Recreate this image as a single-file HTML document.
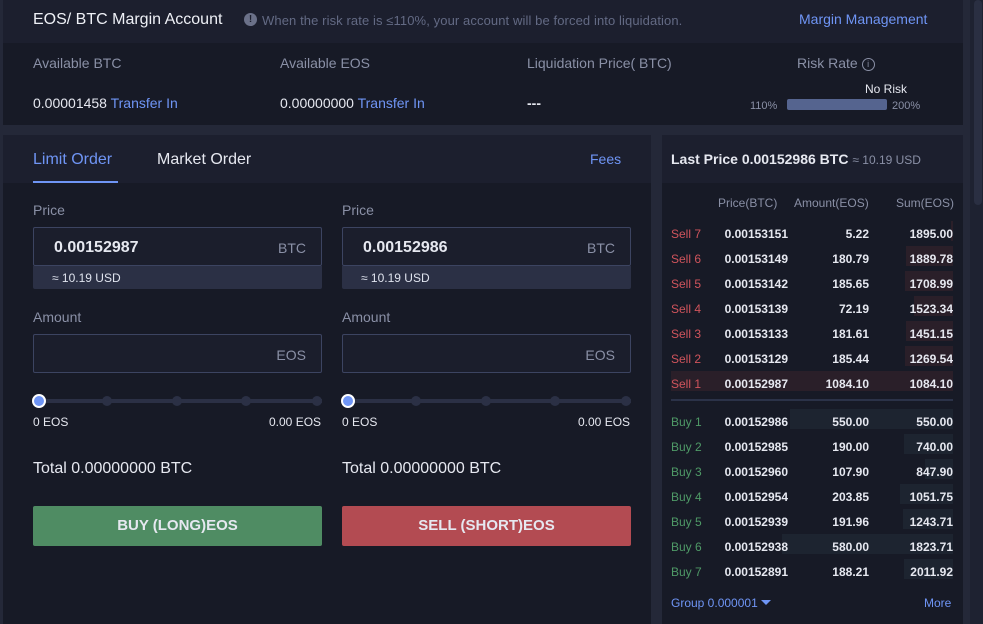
<!DOCTYPE html>
<html><head><meta charset="utf-8"><style>
*{margin:0;padding:0;box-sizing:border-box}
body{width:983px;height:624px;background:#242838;font-family:"Liberation Sans",sans-serif;position:relative;overflow:hidden;color:#e6e8f0}
.a{position:absolute}
.blue{color:#6f95f5}
.gray{color:#8a90a6}
.inp{position:absolute;height:39px;border:1px solid #3c4461;border-radius:2px;background:#1b1e2c}
.usd{position:absolute;height:23px;background:#2b3045;border-radius:0 0 2px 2px;font-size:12px;color:#dfe3ee;padding:5px 0 0 19px}
.row{position:absolute;left:662px;width:301px;height:25px;font-size:12px}
.row span{position:absolute;top:6px}
</style></head><body>
<div class="a" style="left:3px;top:0;width:960px;height:43px;background:#1c1f2e"></div>
<div class="a" style="left:3px;top:43px;width:960px;height:82px;background:#171a26"></div>
<div class="a" style="left:33px;top:11px;font-size:16px;color:#eef0f6">EOS/ BTC Margin Account</div>
<div class="a" style="left:244px;top:13px;width:13px;height:13px;border-radius:50%;background:#6b7189;color:#1c1f2e;font-size:10px;font-weight:bold;text-align:center;line-height:13px">!</div>
<div class="a gray" style="left:262px;top:13px;font-size:13px;color:#636a84;letter-spacing:0.1px">When the risk rate is ≤110%, your account will be forced into liquidation.</div>
<div class="a blue" style="left:799px;top:11px;font-size:14px">Margin Management</div>
<div class="a gray" style="left:33px;top:55px;font-size:14px">Available BTC</div>
<div class="a gray" style="left:280px;top:55px;font-size:14px">Available EOS</div>
<div class="a gray" style="left:527px;top:55px;font-size:14px">Liquidation Price( BTC)</div>
<div class="a gray" style="left:797px;top:55px;font-size:14px">Risk Rate <span style="display:inline-block;width:13px;height:13px;border:1px solid #8a90a6;border-radius:50%;font-size:9px;text-align:center;line-height:11px;vertical-align:1px">i</span></div>
<div class="a" style="left:33px;top:95px;font-size:14px">0.00001458 <span class="blue">Transfer In</span></div>
<div class="a" style="left:280px;top:95px;font-size:14px">0.00000000 <span class="blue">Transfer In</span></div>
<div class="a" style="left:527px;top:95px;font-size:14px;font-weight:bold">---</div>
<div class="a" style="left:865px;top:82px;font-size:12px">No Risk</div>
<div class="a gray" style="left:750px;top:100px;font-size:11px">110%</div>
<div class="a" style="left:787px;top:99px;width:100px;height:11px;background:#55648f;border-radius:2px"></div>
<div class="a gray" style="left:892px;top:100px;font-size:11px">200%</div>

<div class="a" style="left:3px;top:135px;width:648px;height:489px;background:#171a26"></div>
<div class="a" style="left:3px;top:135px;width:648px;height:48px;background:#1c1f2e"></div>
<div class="a blue" style="left:33px;top:151px;font-size:16px">Limit Order</div>
<div class="a" style="left:33px;top:181px;width:85px;height:2px;background:#6f95f5"></div>
<div class="a" style="left:157px;top:151px;font-size:16px">Market Order</div>
<div class="a blue" style="left:590px;top:151px;font-size:14px">Fees</div>

<div class="a gray" style="left:33px;top:202px;font-size:14px">Price</div>
<div class="a gray" style="left:342px;top:202px;font-size:14px">Price</div>
<div class="inp" style="left:33px;top:227px;width:289px"><div class="a" style="left:20px;top:11px;font-size:16px;font-weight:bold">0.00152987</div><div class="a gray" style="right:15px;top:12px;font-size:14px">BTC</div></div>
<div class="usd" style="left:33px;top:266px;width:289px">≈ 10.19 USD</div>
<div class="inp" style="left:342px;top:227px;width:289px"><div class="a" style="left:20px;top:11px;font-size:16px;font-weight:bold">0.00152986</div><div class="a gray" style="right:15px;top:12px;font-size:14px">BTC</div></div>
<div class="usd" style="left:342px;top:266px;width:289px">≈ 10.19 USD</div>

<div class="a gray" style="left:33px;top:309px;font-size:14px">Amount</div>
<div class="a gray" style="left:342px;top:309px;font-size:14px">Amount</div>
<div class="inp" style="left:33px;top:334px;width:289px"><div class="a gray" style="right:15px;top:12px;font-size:14px">EOS</div></div>
<div class="inp" style="left:342px;top:334px;width:289px"><div class="a gray" style="right:15px;top:12px;font-size:14px">EOS</div></div>

<div class="a" style="left:38px;top:399px;width:284px;height:4px;background:#2b3045"></div>
<div class="a" style="left:347px;top:399px;width:284px;height:4px;background:#2b3045"></div>
<div class="a" style="left:102px;top:396px;width:10px;height:10px;border-radius:50%;background:#2b3045"></div>
<div class="a" style="left:172px;top:396px;width:10px;height:10px;border-radius:50%;background:#2b3045"></div>
<div class="a" style="left:241px;top:396px;width:10px;height:10px;border-radius:50%;background:#2b3045"></div>
<div class="a" style="left:312px;top:396px;width:10px;height:10px;border-radius:50%;background:#2b3045"></div>
<div class="a" style="left:411px;top:396px;width:10px;height:10px;border-radius:50%;background:#2b3045"></div>
<div class="a" style="left:481px;top:396px;width:10px;height:10px;border-radius:50%;background:#2b3045"></div>
<div class="a" style="left:550px;top:396px;width:10px;height:10px;border-radius:50%;background:#2b3045"></div>
<div class="a" style="left:621px;top:396px;width:10px;height:10px;border-radius:50%;background:#2b3045"></div>
<div class="a" style="left:32px;top:394px;width:14px;height:14px;border-radius:50%;background:#6f95f5;border:2px solid #fff"></div>
<div class="a" style="left:341px;top:394px;width:14px;height:14px;border-radius:50%;background:#6f95f5;border:2px solid #fff"></div>
<div class="a" style="left:33px;top:415px;font-size:12px">0 EOS</div>
<div class="a" style="left:269px;top:415px;font-size:12px">0.00 EOS</div>
<div class="a" style="left:342px;top:415px;font-size:12px">0 EOS</div>
<div class="a" style="left:578px;top:415px;font-size:12px">0.00 EOS</div>
<div class="a" style="left:33px;top:460px;font-size:16px">Total 0.00000000 BTC</div>
<div class="a" style="left:342px;top:460px;font-size:16px">Total 0.00000000 BTC</div>
<div class="a" style="left:33px;top:506px;width:289px;height:40px;background:#4f8c63;border-radius:2px;text-align:center;line-height:40px;font-size:15px;font-weight:bold">BUY (LONG)EOS</div>
<div class="a" style="left:342px;top:506px;width:289px;height:40px;background:#b34b52;border-radius:2px;text-align:center;line-height:40px;font-size:15px;font-weight:bold">SELL (SHORT)EOS</div>

<div class="a" style="left:662px;top:135px;width:301px;height:489px;background:#171a26"></div>
<div class="a" style="left:662px;top:135px;width:301px;height:48px;background:#1c1f2e"></div>
<div class="a" style="left:671px;top:151px;font-size:14px"><b>Last Price 0.00152986 BTC</b> <span style="font-size:12px;color:#8a90a6">≈ 10.19 USD</span></div>
<div class="a gray" style="left:718px;top:196px;font-size:12px">Price(BTC)</div>
<div class="a gray" style="left:794px;top:196px;font-size:12px">Amount(EOS)</div>
<div class="a gray" style="left:896px;top:196px;font-size:12px">Sum(EOS)</div>
<div class="a" style="left:970px;top:0;width:13px;height:624px;background:#1e2231"></div>
<div class="a" style="left:974px;top:0;width:8px;height:205px;background:#2a2f42;border-radius:4px"></div>
<div id="ob"></div>
<div class="a" style="left:671px;top:399px;width:282px;height:2px;background:#2b3248"></div>
<div class="a blue" style="left:671px;top:596px;font-size:12px">Group 0.000001 <span style="display:inline-block;width:0;height:0;border-left:5px solid transparent;border-right:5px solid transparent;border-top:5px solid #6f95f5;vertical-align:2px"></span></div>
<div class="a blue" style="left:924px;top:596px;font-size:12px">More</div>
<script>
var s=[["Sell 7","0.00153151","5.22","1895.00",2],["Sell 6","0.00153149","180.79","1889.78",47],["Sell 5","0.00153142","185.65","1708.99",48],["Sell 4","0.00153139","72.19","1523.34",39],["Sell 3","0.00153133","181.61","1451.15",47],["Sell 2","0.00153129","185.44","1269.54",48],["Sell 1","0.00152987","1084.10","1084.10",282]];
var b=[["Buy 1","0.00152986","550.00","550.00",163],["Buy 2","0.00152985","190.00","740.00",49],["Buy 3","0.00152960","107.90","847.90",28],["Buy 4","0.00152954","203.85","1051.75",53],["Buy 5","0.00152939","191.96","1243.71",50],["Buy 6","0.00152938","580.00","1823.71",171],["Buy 7","0.00152891","188.21","2011.92",49]];
var h="";
function r(a,y,c,bg){h+='<div class="row" style="top:'+y+'px"><div class="a" style="right:10px;top:0;height:20px;width:'+a[4]+'px;background:'+bg+'"></div><span style="left:9px;color:'+c+'">'+a[0]+'</span><span style="right:175px;font-weight:bold">'+a[1]+'</span><span style="right:94px;font-weight:bold">'+a[2]+'</span><span style="right:10px;font-weight:bold">'+a[3]+'</span></div>';}
s.forEach(function(a,i){r(a,221+i*25,"#d0545c","#2a1f29")});
b.forEach(function(a,i){r(a,409+i*25,"#4f9a67","#1d2430")});
document.getElementById("ob").innerHTML=h;
</script>
</body></html>
